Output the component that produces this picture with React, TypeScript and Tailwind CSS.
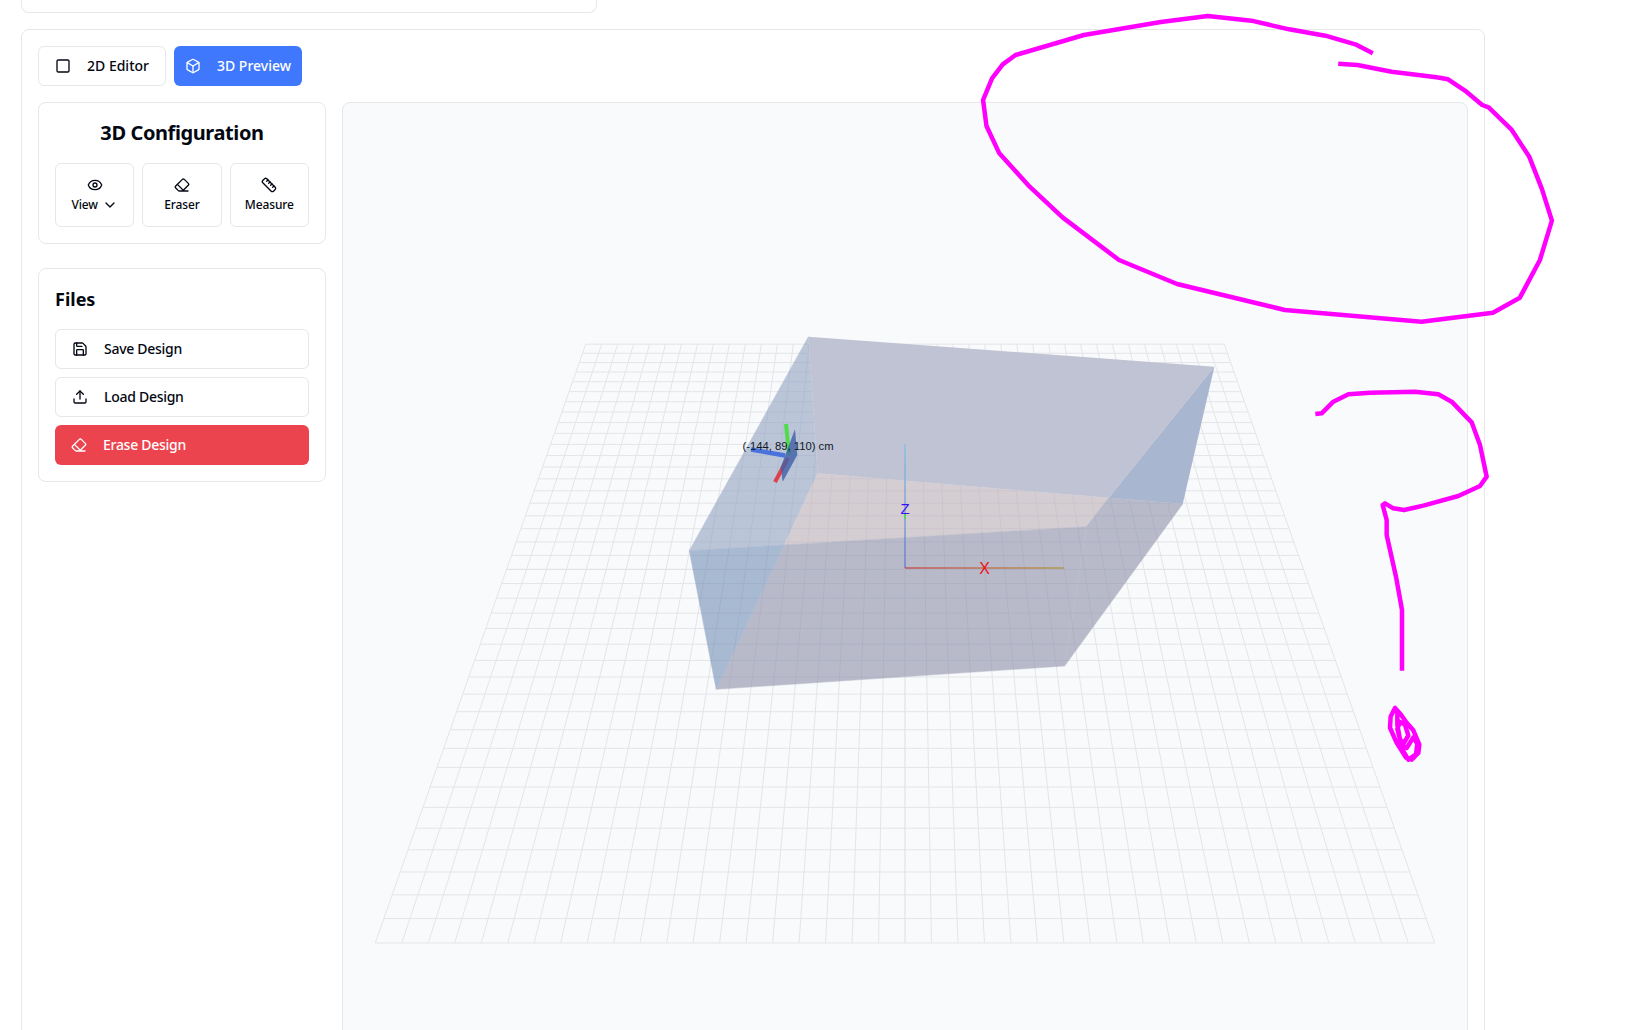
import { Box, ChevronDown, Eraser, Eye, Ruler, Save, Square, Upload } from "lucide-react";

type Pt = [number, number];

const toPoints = (pts: Pt[]) => pts.map((p) => p.join(",")).join(" ");

// raw crops were read in crop coordinates, this maps them back onto the page
const fromCrop = (pts: Pt[], x0: number, y0: number, sx: number, sy: number): Pt[] =>
  pts.map(([x, y]) => [x / sx + x0, y / sy + y0]);

const circleStroke = fromCrop(
  [
    [966, 160], [925, 133], [855, 107], [770, 88], [682, 62], [580, 48], [470, 66], [290, 105], [130, 165],
    [100, 193], [75, 235], [54, 300], [62, 378], [92, 460], [163, 560], [240, 652], [372, 780], [508, 852],
    [760, 930], [1080, 965], [1247, 938], [1310, 893], [1357, 780], [1385, 662], [1362, 568], [1332, 470],
    [1290, 388], [1237, 322], [1222, 315], [1185, 275], [1142, 238], [1115, 232], [1010, 215], [930, 195], [885, 191],
  ],
  960, 0, 2.34, 3,
);

const questionStroke = fromCrop(
  [
    [76, 132], [95, 130], [130, 95], [175, 73], [240, 68], [375, 65], [445, 73], [485, 95], [545, 157],
    [570, 225], [590, 320], [570, 348], [505, 378], [400, 407], [342, 420], [310, 415], [285, 400], [278, 405],
    [290, 450], [290, 495], [318, 620], [336, 720], [336, 902],
  ],
  1290, 370, 3, 3,
);

const dotStroke = fromCrop(
  [
    [45, 25], [32, 45], [30, 72], [50, 108], [78, 143], [95, 148], [115, 132], [118, 112], [100, 78], [80, 60],
    [62, 40], [45, 25], [52, 35], [52, 65], [60, 100], [72, 108], [85, 90], [75, 65], [60, 58], [52, 75], [60, 100],
    [68, 125], [85, 148], [108, 135], [112, 110], [100, 95], [80, 120], [62, 112],
  ],
  1380, 697.5, 3, 2.38,
);

// floor grid: 40 x 40 cells in perspective
const FRONT_Y = 943;
const HORIZON_Y = -564;
const CENTER_X = 905;
const FRONT_W = 1059.5;
const DEPTH = 0.6594;
const CELLS = 40;

const floorScale = (s: number) => 1 / (1 + DEPTH * s);
const floorY = (s: number) => HORIZON_Y + (FRONT_Y - HORIZON_Y) * floorScale(s);
const floorX = (u: number, s: number) => CENTER_X + (u - 0.5) * FRONT_W * floorScale(s);

const cellIndex = Array.from({ length: CELLS + 1 }, (_, i) => i);
const gridStroke = (i: number) => (i === CELLS / 2 ? "#dcdfe3" : "#e3e5e8");

// the box, split into the areas where its translucent faces overlap
const A: Pt = [808.4, 336.7];
const B: Pt = [1214.4, 366.7];
const C: Pt = [1182.7, 504];
const D: Pt = [1064.6, 666];
const E: Pt = [716.2, 689.3];
const F: Pt = [689.3, 550.7];
const G: Pt = [817.7, 473.3];
const H: Pt = [1086.3, 526.7];
const P: Pt = [784.2, 544.9];
const Q: Pt = [1108.7, 497.8];

// floor shows through these
const seeThroughAreas: { pts: Pt[]; fill: string }[] = [
  { pts: [A, G, P, F], fill: "#93a2c2" },
  { pts: [G, Q, H, P], fill: "#bdb1ba" },
  { pts: [Q, C, D, H], fill: "#8e91ab" },
  { pts: [P, H, D, E], fill: "#8e91ab" },
  { pts: [F, P, E], fill: "#748eb7" },
];

// these sit above the floor, nothing shows through
const solidAreas: { pts: Pt[]; fill: string }[] = [
  { pts: [A, B, Q, G], fill: "#bfc3d3" },
  { pts: [B, C, Q], fill: "#a9b6cf" },
];

function Scene() {
  return (
    <svg className="block h-full w-full" viewBox="343 103 1124 998" preserveAspectRatio="xMinYMin slice">
      <defs>
        <linearGradient id="xAxis" gradientUnits="userSpaceOnUse" x1="905" y1="568" x2="1064" y2="568">
          <stop offset="0" stopColor="#d01f1f" />
          <stop offset="1" stopColor="#b08a10" />
        </linearGradient>
        <linearGradient id="zAxis" gradientUnits="userSpaceOnUse" x1="905" y1="568" x2="905" y2="444">
          <stop offset="0" stopColor="#4f66d8" />
          <stop offset="1" stopColor="#6fc0e4" />
        </linearGradient>
      </defs>

      <g strokeWidth="1">
        {cellIndex.map((i) => (
          <line key={`h${i}`} x1={floorX(0, i / CELLS)} y1={floorY(i / CELLS)} x2={floorX(1, i / CELLS)} y2={floorY(i / CELLS)} stroke={gridStroke(i)} />
        ))}
        {cellIndex.map((i) => (
          <line key={`v${i}`} x1={floorX(i / CELLS, 0)} y1={floorY(0)} x2={floorX(i / CELLS, 1)} y2={floorY(1)} stroke={gridStroke(i)} />
        ))}
      </g>

      <g opacity="0.6">
        {seeThroughAreas.map((area, i) => (
          <polygon key={i} points={toPoints(area.pts)} fill={area.fill} stroke={area.fill} strokeWidth="0.5" />
        ))}
      </g>
      {solidAreas.map((area, i) => (
        <polygon key={i} points={toPoints(area.pts)} fill={area.fill} />
      ))}

      <line x1="905" y1="444" x2="905" y2="568" stroke="url(#zAxis)" strokeWidth="1" />
      <line x1="905" y1="568" x2="1064" y2="568" stroke="url(#xAxis)" strokeWidth="1" />
      <line x1="905" y1="514" x2="905" y2="519" stroke="#3fe03f" strokeWidth="1.5" />
      <text x="905" y="514" textAnchor="middle" fontFamily="'Liberation Sans', sans-serif" fontSize="15" fill="#3a10f0">Z</text>
      <text x="984.5" y="573.5" textAnchor="middle" fontFamily="'Liberation Sans', sans-serif" fontSize="16" fill="#f01020">X</text>

      <line x1="786" y1="424" x2="789" y2="455" stroke="#4fdc4a" strokeWidth="4" />
      <line x1="751" y1="449.5" x2="785" y2="455.5" stroke="#4a72dc" strokeWidth="4.5" />
      <line x1="775" y1="482" x2="788" y2="458" stroke="#e0404c" strokeWidth="4" />
      <polygon points="795,429.3 797.3,455 782.7,481.7 780.7,467.3" fill="#3f5fa8" fillOpacity="0.8" />
      <text x="742.5" y="449.5" fontFamily="'Liberation Sans', sans-serif" fontSize="11.25" fill="#111827">(-144, 89, 110) cm</text>
    </svg>
  );
}

function ToolButton({ icon, label, chevron }: { icon: React.ReactNode; label: string; chevron?: boolean }) {
  return (
    <button className="flex h-16 flex-col items-center justify-center gap-1 rounded-md border border-gray-200 bg-white text-xs font-medium tracking-[-0.01em] text-gray-950">
      {icon}
      <span className="flex items-center gap-1">
        {label}
        {chevron && <ChevronDown className="h-4 w-4" />}
      </span>
    </button>
  );
}

function FileButton({ icon, label, danger }: { icon: React.ReactNode; label: string; danger?: boolean }) {
  return (
    <button
      className={`flex h-10 w-full items-center gap-4 rounded-md px-4 text-sm font-medium tracking-[-0.02em] ${
        danger ? "bg-[#ec444e] text-white" : "border border-gray-200 bg-white text-gray-950"
      }`}
    >
      {icon}
      {label}
    </button>
  );
}

export default function App() {
  return (
    <div className="relative h-screen overflow-hidden bg-white pl-[21px] font-['Noto_Sans',sans-serif]">
      {/* Previous card, scrolled almost out of view */}
      <div className="h-[13px] w-[576px] rounded-b-lg border border-t-0 border-gray-200 bg-white" />

      <div className="mt-4 w-[1464px] rounded-lg border border-gray-200 bg-white p-4">
        <div className="mb-4 flex gap-2">
          <button className="flex h-10 w-32 items-center justify-center gap-4 whitespace-nowrap rounded-md border border-gray-200 bg-white text-sm font-medium text-gray-950">
            <Square className="h-4 w-4 shrink-0" />
            2D Editor
          </button>
          <button className="flex h-10 w-32 items-center justify-center gap-4 whitespace-nowrap rounded-md bg-[#3f78fc] text-sm font-medium text-white">
            <Box className="h-4 w-4 shrink-0" />
            3D Preview
          </button>
        </div>

        <div className="flex gap-4">
          {/* Sidebar */}
          <div className="flex w-[288px] shrink-0 flex-col gap-6">
            <div className="rounded-lg border border-gray-200 bg-white p-4">
              <h2 className="mb-4 text-center text-xl font-bold tracking-[-0.02em] text-gray-950">3D Configuration</h2>
              <div className="grid grid-cols-3 gap-2">
                <ToolButton icon={<Eye className="h-4 w-4" />} label="View" chevron />
                <ToolButton icon={<Eraser className="h-4 w-4" />} label="Eraser" />
                <ToolButton icon={<Ruler className="h-4 w-4" />} label="Measure" />
              </div>
            </div>

            <div className="rounded-lg border border-gray-200 bg-white p-4">
              <h2 className="mb-4 text-lg font-bold text-gray-950">Files</h2>
              <div className="flex flex-col gap-2">
                <FileButton icon={<Save className="h-4 w-4" />} label="Save Design" />
                <FileButton icon={<Upload className="h-4 w-4" />} label="Load Design" />
                <FileButton icon={<Eraser className="h-4 w-4" />} label="Erase Design" danger />
              </div>
            </div>
          </div>

          {/* 3D viewport */}
          <div className="h-[1000px] min-w-0 flex-1 overflow-hidden rounded-lg border border-gray-200 bg-gray-50">
            <Scene />
          </div>
        </div>
      </div>

      {/* Hand-drawn annotation on top of the page */}
      <svg className="pointer-events-none absolute top-0 left-0" width="1630" height="1030" viewBox="0 0 1630 1030">
        <g fill="none" stroke="#ff00ff" strokeWidth="4.5" strokeLinejoin="round">
          <polyline points={toPoints(circleStroke)} />
          <polyline points={toPoints(questionStroke)} />
          <polyline points={toPoints(dotStroke)} />
        </g>
      </svg>
    </div>
  );
}
